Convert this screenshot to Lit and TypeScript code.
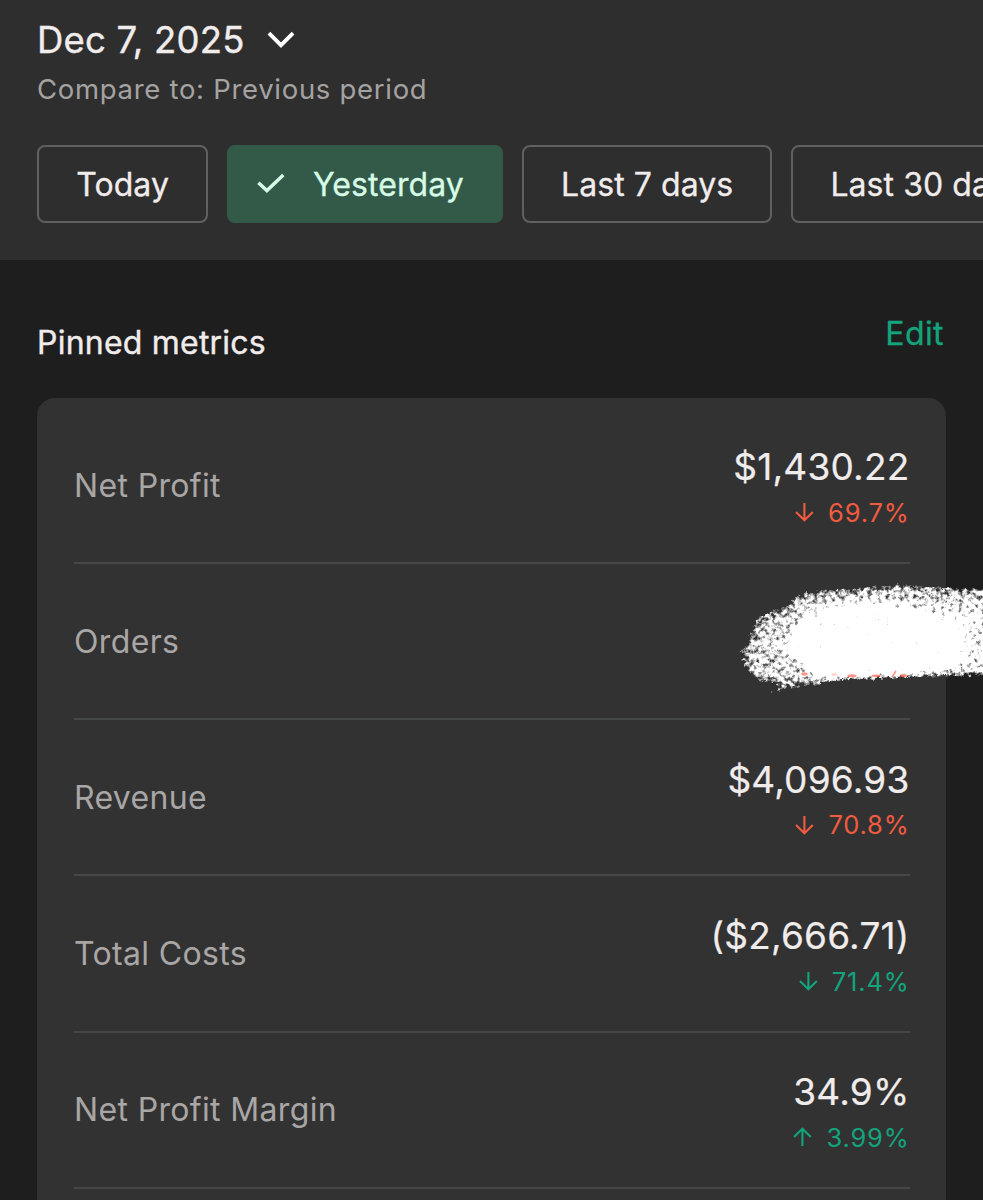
import { LitElement, html, css, svg, nothing } from "lit";
import { customElement, property } from "lit/decorators.js";
import { classMap } from "lit/directives/class-map.js";

interface Metric {
  label: string;
  value?: string;
  change?: string;
  direction?: "up" | "down";
  tone?: "good" | "bad";
}

const METRICS: Metric[] = [
  { label: "Net Profit", value: "$1,430.22", change: "69.7%", direction: "down", tone: "bad" },
  { label: "Orders" },
  { label: "Revenue", value: "$4,096.93", change: "70.8%", direction: "down", tone: "bad" },
  { label: "Total Costs", value: "($2,666.71)", change: "71.4%", direction: "down", tone: "good" },
  { label: "Net Profit Margin", value: "34.9%", change: "3.99%", direction: "up", tone: "good" },
];

const RANGES = ["Today", "Yesterday", "Last 7 days", "Last 30 days"];

@customElement("date-header")
class DateHeader extends LitElement {
  @property() selected = "Yesterday";

  static styles = css`
    :host {
      display: block;
      box-sizing: border-box;
      height: 260px;
      padding: 16px 0 0 37px;
      background: #2e2e2e;
      overflow: hidden;
    }
    .date {
      display: flex;
      align-items: center;
      height: 48px;
      font-size: 36.5px;
      letter-spacing: 0.2px;
      -webkit-text-stroke: 0.4px currentColor;
      color: #f1ecec;
      white-space: nowrap;
    }
    .chevron {
      width: 30px;
      height: 20px;
      margin-left: 21.6px;
    }
    .compare {
      height: 50px;
      line-height: 50px;
      font-size: 27.5px;
      letter-spacing: 0.7px;
      color: #a5a2a2;
      white-space: nowrap;
    }
    .chips {
      display: flex;
      gap: 18.8px;
      margin-top: 31px;
    }
    .chip {
      flex: none;
      display: flex;
      align-items: center;
      box-sizing: border-box;
      height: 77.5px;
      padding: 1px 37.2px 0;
      border: 2px solid #5e6061;
      border-radius: 8px;
      font-size: 32px;
      letter-spacing: 0.07px;
      -webkit-text-stroke: 0.3px currentColor;
      color: #f1ecec;
      white-space: nowrap;
    }
    .selected {
      padding-left: 27.7px;
      border-color: #335a48;
      background: #335a48;
      color: #d6fbe6;
    }
    .check {
      width: 30px;
      height: 22px;
      margin-right: 26.3px;
    }
  `;

  render() {
    return html`
      <div class="date">
        <span>Dec 7, 2025</span>
        <svg class="chevron" viewBox="0 0 30 20" fill="none" stroke="#fff" stroke-width="3.9">
          <path d="M2.9 3.2 15 15.2 27.1 3.2" />
        </svg>
      </div>
      <div class="compare">Compare to: Previous period</div>
      <div class="chips">
        ${RANGES.map(
          (range) => html`
            <div class=${classMap({ chip: true, selected: range === this.selected })}>
              ${range === this.selected
                ? html`<svg class="check" viewBox="0 0 30 22" fill="none" stroke="#d6fbe6" stroke-width="3.5">
                    <path d="M1.4 9.8 9.9 17.6 26.3 2.1" />
                  </svg>`
                : nothing}
              <span>${range}</span>
            </div>
          `
        )}
      </div>
    `;
  }
}

@customElement("metric-row")
class MetricRow extends LitElement {
  @property({ attribute: false }) metric!: Metric;

  static styles = css`
    :host {
      display: flex;
      justify-content: space-between;
      box-sizing: border-box;
      height: 156.2px;
      border-bottom: 2px solid #464848;
      white-space: nowrap;
    }
    .label {
      align-self: center;
      padding-top: 0.4px;
      font-size: 32px;
      letter-spacing: 0.35px;
      color: #a9a6a6;
    }
    .figures {
      display: flex;
      flex-direction: column;
      align-items: flex-end;
      padding-top: 36.4px;
    }
    .value {
      line-height: 46px;
      font-size: 37px;
      letter-spacing: 0.2px;
      -webkit-text-stroke: 0.2px currentColor;
      color: #f1ecec;
    }
    .change {
      display: flex;
      align-items: center;
      height: 44.6px;
      font-size: 25.5px;
      letter-spacing: 0.8px;
    }
    .bad {
      color: #f15b40;
    }
    .good {
      color: #13a47d;
    }
    .arrow {
      width: 20px;
      height: 20px;
      margin-right: 13px;
    }
  `;

  render() {
    const { label, value, change, direction, tone } = this.metric;
    return html`
      <span class="label">${label}</span>
      ${value
        ? html`<div class="figures">
            <span class="value">${value}</span>
            <span class=${classMap({ change: true, good: tone === "good", bad: tone === "bad" })}>
              <svg class="arrow" viewBox="0 0 20 20" fill="none" stroke="currentColor" stroke-width="2.1">
                <path d=${direction === "down" ? "M9.4 1v17M1 9.9 9.4 18.2 17.8 9.9" : "M9.4 19V2M1 10.1 9.4 1.8 17.8 10.1"} />
              </svg>
              <span>${change}</span>
            </span>
          </div>`
        : nothing}
    `;
  }
}

/* Dry-brush stroke that hides the Orders figures. */
const BRUSH = svg`
  <defs>
    <filter id="dry" filterUnits="userSpaceOnUse" x="725" y="570" width="290" height="140" color-interpolation-filters="sRGB">
      <feTurbulence type="fractalNoise" baseFrequency="0.22" numOctaves="4" seed="8" result="n" />
      <feColorMatrix in="n" type="matrix" values="0 0 0 0 1  0 0 0 0 1  0 0 0 0 1  1 0 0 0 0" result="grain" />
      <feGaussianBlur in="SourceGraphic" stdDeviation="4" result="soft" />
      <feComposite in="soft" in2="grain" operator="arithmetic" k1="0" k2="2.5" k3="2.9" k4="-1.95" result="mix" />
      <feDisplacementMap in="SourceGraphic" in2="n" scale="9" xChannelSelector="R" yChannelSelector="G" result="rough" />
      <feColorMatrix in="rough" type="matrix" values="1 0 0 0 0  0 1 0 0 0  0 0 1 0 0  0 0 0 3 0" result="edge" />
      <feComposite in="mix" in2="edge" operator="in" result="paint" />
      <feGaussianBlur in="paint" stdDeviation="0.5" />
    </filter>
  </defs>
  <g filter="url(#dry)" fill="#fff">
    <path fill-opacity="0.55" d="M741 655 752 634 757 620 770 612 788 606 796 597 812 591 835 589 880 587 896 585 915 586 940 588 1000 588V674L950 676 900 677 850 679 815 684 771 691 781 684 760 681 748 671Z" />
    <path fill-opacity="0.9" d="M782 648 802 622 822 609 860 602 900 605 935 614 965 625V662L900 677 860 678 820 678Z" />
    <path fill-opacity="0.3" d="M930 606H1000V674H930Z" />
  </g>
  <g fill="#ff6f5c">
    <ellipse cx="804.5" cy="674" rx="3.2" ry="1.7" opacity="0.7" />
    <ellipse cx="834" cy="674.5" rx="2.6" ry="1.3" opacity="0.35" />
    <ellipse cx="852" cy="675.8" rx="4.5" ry="1.5" opacity="0.75" />
    <ellipse cx="876" cy="675.8" rx="4.5" ry="1.4" opacity="0.75" />
    <path d="M892 677 896 671" stroke="#ff6f5c" stroke-width="1.4" opacity="0.8" />
    <ellipse cx="903.5" cy="675.6" rx="3.6" ry="1.6" opacity="0.8" />
  </g>
`;

@customElement("app-root")
class AppRoot extends LitElement {
  static styles = css`
    :host {
      display: block;
      position: relative;
      height: 1200px;
      overflow: hidden;
      background: #1e1e1e;
      font-family: Inter, "Liberation Sans", sans-serif;
    }
    .heading {
      display: flex;
      justify-content: space-between;
      align-items: flex-start;
      height: 138px;
      padding: 0 39px 0 37px;
      box-sizing: border-box;
      font-size: 32px;
      white-space: nowrap;
    }
    .title {
      padding-top: 58px;
      line-height: 50px;
      letter-spacing: 0.22px;
      -webkit-text-stroke: 0.4px currentColor;
      color: #f1ecec;
    }
    .edit {
      padding-top: 49px;
      line-height: 50px;
      letter-spacing: 0.4px;
      -webkit-text-stroke: 0.3px currentColor;
      color: #13a47d;
    }
    .card {
      box-sizing: border-box;
      height: 860px;
      margin: 0 37px;
      padding: 9.8px 36.5px 0 37px;
      border-radius: 18px;
      background: #323232;
    }
    .brush {
      position: absolute;
      left: 725px;
      top: 570px;
      width: 258px;
      height: 140px;
    }
  `;

  render() {
    return html`
      <date-header></date-header>
      <div class="heading">
        <span class="title">Pinned metrics</span>
        <span class="edit">Edit</span>
      </div>
      <div class="card">${METRICS.map((m) => html`<metric-row .metric=${m}></metric-row>`)}</div>
      <svg class="brush" viewBox="725 570 258 140">${BRUSH}</svg>
    `;
  }
}
